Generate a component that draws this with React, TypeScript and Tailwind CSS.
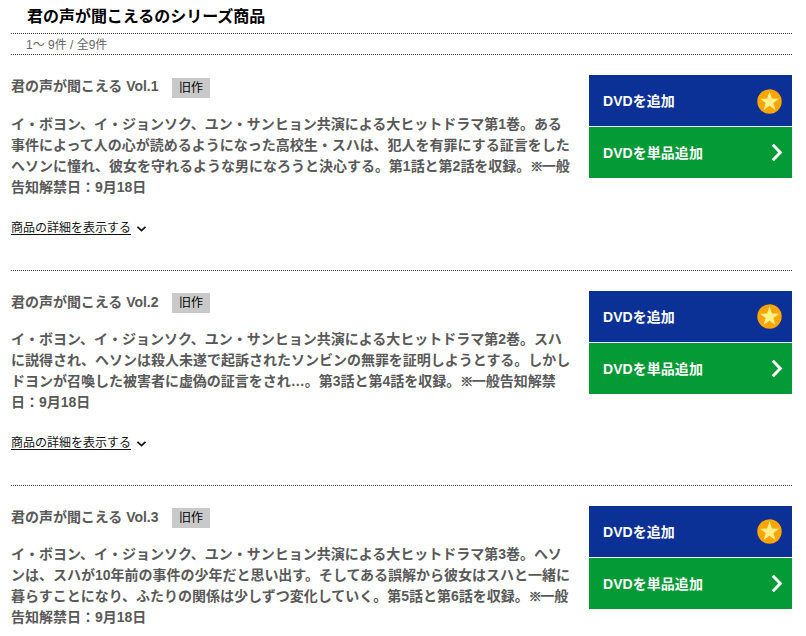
interface Product {
  title: string
  lines: string[]
  showDetails?: boolean
}

const products: Product[] = [
  {
    title: "君の声が聞こえる Vol.1",
    lines: [
      "イ・ボヨン、イ・ジョンソク、ユン・サンヒョン共演による大ヒットドラマ第1巻。ある",
      "事件によって人の心が読めるようになった高校生・スハは、犯人を有罪にする証言をした",
      "ヘソンに憧れ、彼女を守れるような男になろうと決心する。第1話と第2話を収録。※一般",
      "告知解禁日：9月18日",
    ],
    showDetails: true,
  },
  {
    title: "君の声が聞こえる Vol.2",
    lines: [
      "イ・ボヨン、イ・ジョンソク、ユン・サンヒョン共演による大ヒットドラマ第2巻。スハ",
      "に説得され、ヘソンは殺人未遂で起訴されたソンビンの無罪を証明しようとする。しかし",
      "ドヨンが召喚した被害者に虚偽の証言をされ…。第3話と第4話を収録。※一般告知解禁",
      "日：9月18日",
    ],
    showDetails: true,
  },
  {
    title: "君の声が聞こえる Vol.3",
    lines: [
      "イ・ボヨン、イ・ジョンソク、ユン・サンヒョン共演による大ヒットドラマ第3巻。ヘソ",
      "ンは、スハが10年前の事件の少年だと思い出す。そしてある誤解から彼女はスハと一緒に",
      "暮らすことになり、ふたりの関係は少しずつ変化していく。第5話と第6話を収録。※一般",
      "告知解禁日：9月18日",
    ],
  },
]

function StarIcon() {
  return (
    <svg className="h-[25px] w-[25px] group-first:mt-px" viewBox="0 0 25 25">
      <circle cx="12.5" cy="12.5" r="12.2" fill="#ffa500" />
      <path
        d="M12.5 2.6 14.9 9.6 22 9.7 16.4 14 18.4 20.9 12.5 16.8 6.6 20.9 8.6 14 3 9.7 10.1 9.6Z"
        fill="#fff08c"
      />
    </svg>
  )
}

function ChevronRight() {
  return (
    <svg className="h-[19px] w-3" viewBox="0 0 12 19" fill="none" stroke="#fff" strokeWidth="3">
      <path d="M1.8 1.8 9.3 9.5 1.8 17.2" />
    </svg>
  )
}

function ChevronDown() {
  return (
    <svg className="mt-px h-[6px] w-[9px]" viewBox="0 0 9 6" fill="none" stroke="#111" strokeWidth="1.7">
      <path d="M0.5 0.8 4.5 4.6 8.5 0.8" />
    </svg>
  )
}

// The reference mark is set smaller than the text around it
function Line({ text }: { text: string }) {
  const [before, after] = text.split("※")
  return (
    <span className="block h-[21px]">
      {before}
      {after && (
        <span className="font-['Noto_Sans_CJK_JP'] text-[13px] leading-none tracking-[-1.5px] [-webkit-text-stroke:0.5px_#595959]">
          ※
        </span>
      )}
      {after}
    </span>
  )
}

function ProductRow({ title, lines, showDetails }: Product) {
  return (
    <li className="group flex h-[215px] justify-between border-b border-dotted border-[#444] pt-5 first:h-[216px] last:h-auto last:border-b-0">
      <div className="w-[562px] whitespace-nowrap group-first:pt-px">
        <div className="flex h-[22px] items-start">
          <h3 className="w-[147px] text-[14px] leading-[22px] font-bold tracking-[-0.03px] text-[#595959] group-first:-mt-px">
            {title}
          </h3>
          <span className="mt-[2px] ml-[14px] flex h-5 w-[38px] shrink-0 items-center justify-center bg-[#c9c9c9] text-[12px] text-black">
            旧作
          </span>
        </div>
        <p className="mt-4 text-[14px] leading-[21px] font-bold tracking-[-0.01px] text-[#595959]">
          {lines.map((line) => (
            <Line key={line} text={line} />
          ))}
        </p>
        {showDetails && (
          <a href="#" className="mt-[21px] flex items-center gap-[6px] text-[12px] leading-[18px] text-[#111]">
            <span className="underline underline-offset-2">商品の詳細を表示する</span>
            <ChevronDown />
          </a>
        )}
      </div>
      <div className="flex w-[203px] flex-col gap-px text-[14px] font-bold tracking-[0.05px] text-white">
        <button className="flex h-[51px] items-center justify-between bg-[#0b3196] pr-[10px] pl-[14px]">
          <span className="pt-px">DVDを追加</span>
          <StarIcon />
        </button>
        <button className="flex h-[51px] items-center justify-between bg-[#049a35] pr-[9px] pl-[14px]">
          <span className="pt-px">DVDを単品追加</span>
          <ChevronRight />
        </button>
      </div>
    </li>
  )
}

export default function App() {
  return (
    <main
      lang="ja"
      className="h-[636px] overflow-hidden bg-white pr-[14px] pl-[11px] font-['Liberation_Sans','Noto_Sans_CJK_JP',sans-serif]"
    >
      <h2 className="h-[33px] pl-4 text-[16px] leading-[34px] font-bold tracking-[-0.03px] text-black">
        君の声が聞こえるのシリーズ商品
      </h2>
      <p className="h-[22px] border-y border-dotted border-[#444] pl-[15px] text-[12px] leading-[22px] text-[#666]">
        1～ 9件 / 全9件
      </p>
      <ul>
        {products.map((product) => (
          <ProductRow key={product.title} {...product} />
        ))}
      </ul>
    </main>
  )
}
